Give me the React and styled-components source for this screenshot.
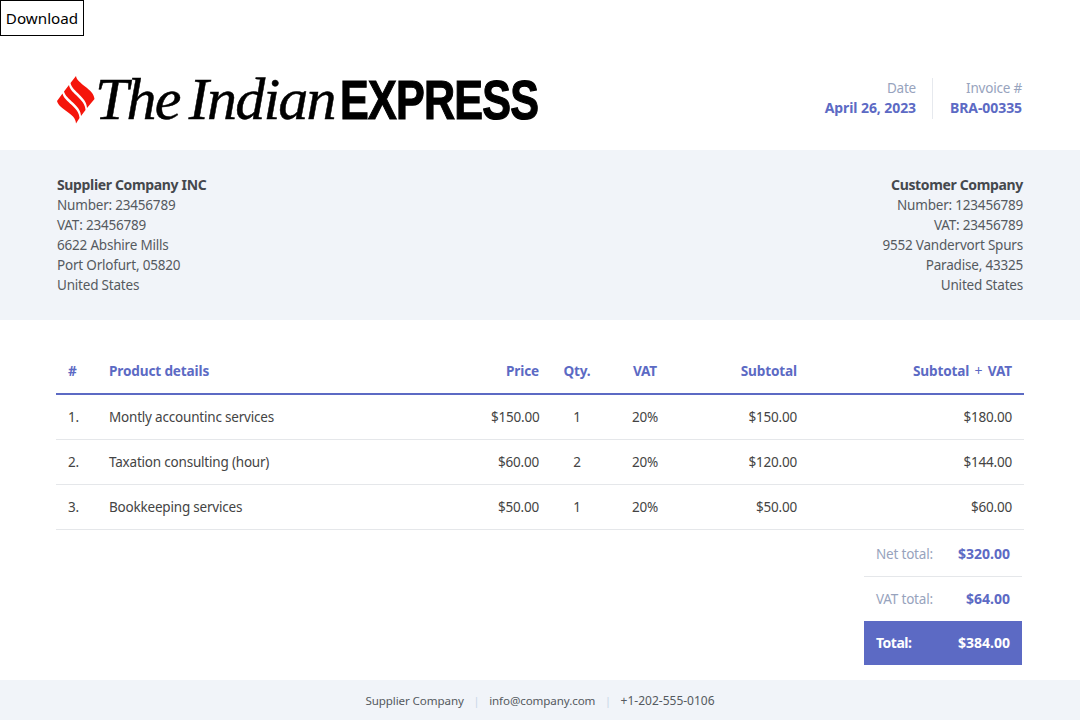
import React from 'react'
import styled, { createGlobalStyle } from 'styled-components'

const GlobalStyle = createGlobalStyle`
    html, body {
        margin: 0;
        padding: 0;
        background: #fff;
        font-family: "Noto Sans", "Open Sans", sans-serif;
        color: #444;
    }
`

const lines = [
    { no: '1.', name: 'Montly accountinc services', price: '$150.00', qty: '1', vat: '20%', sub: '$150.00', total: '$180.00' },
    { no: '2.', name: 'Taxation consulting (hour)', price: '$60.00', qty: '2', vat: '20%', sub: '$120.00', total: '$144.00' },
    { no: '3.', name: 'Bookkeeping services', price: '$50.00', qty: '1', vat: '20%', sub: '$50.00', total: '$60.00' },
]

function Mark() {
    return (
        <svg width="38" height="48" viewBox="0 0 38 48">
            <g fill="#f5150b">
                <path d="M19 0 C20 8 37 13 37.500 23 L30 32 C30 21 15.500 16 13.500 7 Z" />
                <path d="M12 9 C13.500 18 28.500 23 28.500 34 L24 40 C24 29 9 24 7 15.500 Z" />
                <path d="M5.500 17.500 C7 26 22.500 31 22.500 42 L19 47.500 C19 37 2 34 0 25 Z" />
            </g>
        </svg>
    )
}

export default function App() {
    return (
        <>
            <GlobalStyle />
            <DownloadButton>Download</DownloadButton>
            <Header>
                <Logo>
                    <Mark />
                    <LogoSerif>The Indian</LogoSerif>
                    <LogoBold>EXPRESS</LogoBold>
                </Logo>
                <Meta>
                    <MetaCell>
                        <MetaLabel>Date</MetaLabel>
                        <MetaValue>April 26, 2023</MetaValue>
                    </MetaCell>
                    <MetaCell $divided>
                        <MetaLabel>Invoice #</MetaLabel>
                        <MetaValue>BRA-00335</MetaValue>
                    </MetaCell>
                </Meta>
            </Header>

            <Parties>
                <Party>
                    <strong>Supplier Company INC</strong>
                    <span>Number: 23456789</span>
                    <span>VAT: 23456789</span>
                    <span>6622 Abshire Mills</span>
                    <span>Port Orlofurt, 05820</span>
                    <span>United States</span>
                </Party>
                <Party $right>
                    <strong>Customer Company</strong>
                    <span>Number: 123456789</span>
                    <span>VAT: 23456789</span>
                    <span>9552 Vandervort Spurs</span>
                    <span>Paradise, 43325</span>
                    <span>United States</span>
                </Party>
            </Parties>

            <Main>
                <Table>
                    <thead>
                        <tr>
                            <th>#</th>
                            <th>Product details</th>
                            <th className="r">Price</th>
                            <th className="c">Qty.</th>
                            <th className="c">VAT</th>
                            <th className="r">Subtotal</th>
                            <th className="r">Subtotal <em>+</em> VAT</th>
                        </tr>
                    </thead>
                    <tbody>
                        {lines.map(l => (
                            <tr key={l.no}>
                                <td>{l.no}</td>
                                <td>{l.name}</td>
                                <td className="r">{l.price}</td>
                                <td className="c">{l.qty}</td>
                                <td className="c">{l.vat}</td>
                                <td className="r">{l.sub}</td>
                                <td className="r">{l.total}</td>
                            </tr>
                        ))}
                    </tbody>
                </Table>

                <Totals>
                    <TotalRow $line>
                        <span>Net total:</span>
                        <b>$320.00</b>
                    </TotalRow>
                    <TotalRow>
                        <span>VAT total:</span>
                        <b>$64.00</b>
                    </TotalRow>
                    <GrandTotal>
                        <span>Total:</span>
                        <b>$384.00</b>
                    </GrandTotal>
                </Totals>
            </Main>

            <Footer>
                <span>Supplier Company</span>
                <Pipe>|</Pipe>
                <span>info@company.com</span>
                <Pipe>|</Pipe>
                <Phone>+1-202-555-0106</Phone>
            </Footer>
        </>
    )
}

const DownloadButton = styled.button`
    display: block;
    width: 84px;
    height: 36px;
    padding: 0;
    background: #fff;
    border: 1px solid #000;
    border-radius: 0;
    font-family: "Noto Sans", sans-serif;
    font-size: 15.2px;
    color: #000;
`

const Header = styled.header`
    display: flex;
    justify-content: space-between;
    align-items: center;
    box-sizing: border-box;
    height: 114px;
    padding: 13px 58px 0 57px;
`

const Logo = styled.div`
    display: flex;
    align-items: center;
    color: #000;
    height: 60px;
    white-space: nowrap;
`

const LogoSerif = styled.span`
    font-family: "Liberation Serif", serif;
    font-style: italic;
    font-size: 60px;
    letter-spacing: -1.8px;
    word-spacing: -4px;
    -webkit-text-stroke: 0.5px #000;
`

const LogoBold = styled.span`
    display: inline-block;
    font-family: "Liberation Sans", sans-serif;
    font-weight: 700;
    font-size: 56px;
    letter-spacing: -1px;
    margin-left: 5px;
    width: 196px;
    transform: scaleX(0.77);
    transform-origin: left center;
    -webkit-text-stroke: 1.2px #000;
`

const Meta = styled.div`
    display: flex;
    height: 41px;
    margin-bottom: 2px;
`

const MetaCell = styled.div`
    display: flex;
    flex-direction: column;
    align-items: flex-end;
    line-height: 20px;
    padding-right: ${p => (p.$divided ? '0' : '16px')};
    padding-left: ${p => (p.$divided ? '17px' : '0')};
    border-left: ${p => (p.$divided ? '1px solid #e6e9ee' : 'none')};
`

const MetaLabel = styled.span`
    color: #97a3bd;
    font-size: 13.5px;
    letter-spacing: -0.2px;
`

const MetaValue = styled.span`
    color: #5c6ac4;
    font-weight: 700;
    font-size: 14px;
    letter-spacing: -0.08px;
`

const Parties = styled.section`
    display: flex;
    justify-content: space-between;
    height: 170px;
    padding: 25px 57px;
    box-sizing: border-box;
    background: #f1f4f9;
`

const Party = styled.address`
    display: flex;
    flex-direction: column;
    align-items: ${p => (p.$right ? 'flex-end' : 'flex-start')};
    font-style: normal;
    font-size: 13.5px;
    letter-spacing: -0.2px;
    line-height: 20px;
    color: #555a60;

    strong {
        color: #45484d;
        font-size: 14px;
        font-weight: 700;
        letter-spacing: -0.35px;
    }
`

const Main = styled.main`
    padding: 30px 56px 15px;
`

const Table = styled.table`
    width: 968px;
    table-layout: fixed;
    border-collapse: collapse;
    font-size: 13.5px;

    th, td {
        box-sizing: border-box;
        padding: 0 12px;
        text-align: left;
    }

    th {
        height: 44px;
        padding-bottom: 2px;
        color: #5c6ac4;
        font-weight: 700;
        font-size: 13.6px;
        letter-spacing: -0.15px;
        border-bottom: 2px solid #5c6ac4;
    }

    th em {
        font-style: normal;
        font-weight: 400;
        font-size: 14px;
        margin: 0 2px;
    }

    td {
        height: 45px;
        color: #444;
        letter-spacing: -0.2px;
        border-bottom: 1px solid #e5e7ea;
    }

    .r { text-align: right; }
    .c { text-align: center; }

    th:nth-child(1) { width: 41px; }
    th:nth-child(2) { width: 382px; }
    th:nth-child(3) { width: 72px; }
    th:nth-child(4) { width: 52px; }
    th:nth-child(5) { width: 84px; }
    th:nth-child(6) { width: 122px; }
`

const Totals = styled.div`
    width: 158px;
    margin-left: 808px;
`

const TotalRow = styled.div`
    display: flex;
    justify-content: space-between;
    align-items: center;
    box-sizing: border-box;
    height: ${p => (p.$line ? '47px' : '44px')};
    padding: ${p => (p.$line ? '2px' : '0')} 12px 0;
    color: #97a3bd;
    font-size: 13.5px;
    letter-spacing: -0.2px;
    border-bottom: ${p => (p.$line ? '1px solid #e5e7ea' : 'none')};

    b {
        color: #5c6ac4;
        font-size: 14px;
        letter-spacing: 0;
    }
`

const GrandTotal = styled.div`
    display: flex;
    justify-content: space-between;
    align-items: center;
    height: 44px;
    padding: 0 12px;
    background: #5c6ac4;
    color: #fff;
    font-size: 14px;
    font-weight: 700;

    span {
        letter-spacing: -0.5px;
    }

    b {
        font-weight: 700;
    }
`

const Footer = styled.footer`
    display: flex;
    justify-content: center;
    align-items: center;
    gap: 9.5px;
    box-sizing: border-box;
    height: 40px;
    padding-top: 1px;
    background: #f1f4f9;
    font-size: 11.6px;
    letter-spacing: -0.1px;
    color: #555a60;
`

const Phone = styled.span`
    font-size: 12px;
    letter-spacing: 0;
`

const Pipe = styled.span`
    color: #cbd7e8;
`
